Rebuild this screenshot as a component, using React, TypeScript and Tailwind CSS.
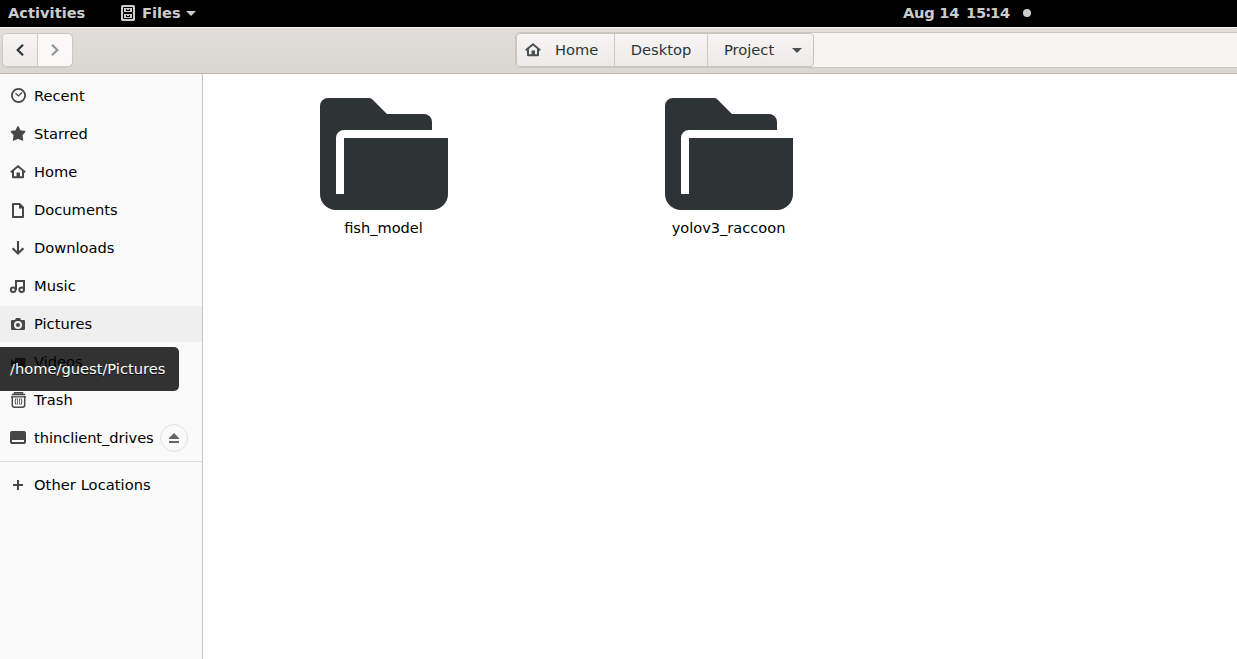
import type { ReactNode } from "react";

const HomeShape = () => (
  <>
    <path d="M0.8 8.2 8 2.3l7.2 5.900" fill="none" stroke="currentColor" strokeWidth="1.900" />
    <path d="M2 7.500 4 6V12.300h2.500V8.500h3.500v3.800h2V6l2 1.500V13.300a1 1 0 0 1-1 1H3a1 1 0 0 1-1-1z" />
  </>
);

const Icon = ({ children }: { children: ReactNode }) => (
  <svg width="16" height="16" viewBox="0 0 16 16" fill="currentColor" className="shrink-0 overflow-visible">
    {children}
  </svg>
);

const places: { name: string; icon: ReactNode; active?: boolean; eject?: boolean }[] = [
  {
    name: "Recent",
    icon: (
      <>
        <circle cx="8.500" cy="7.500" r="6.600" fill="none" stroke="currentColor" strokeWidth="1.800" />
        <path d="M5.600 5.300 8.400 7.900 12 4.600" fill="none" stroke="currentColor" strokeWidth="1.300" />
      </>
    ),
  },
  {
    name: "Starred",
    icon: (
      <path
        d="M8 1 10 5.100 14.500 5.600 11.600 9 12.400 13.800 8 12 3.700 13.800 4.500 9 1.600 5.600 6 5.100z"
        stroke="currentColor"
        strokeWidth="1.700"
        strokeLinejoin="round"
      />
    ),
  },
  { name: "Home", icon: <HomeShape /> },
  {
    name: "Documents",
    icon: (
      <path
        fillRule="evenodd"
        d="M3 1h7l4 4V15a1 1 0 0 1-1 1H3a1 1 0 0 1-1-1V2a1 1 0 0 1 1-1zM4 3v11h8V6.500H9V3z"
      />
    ),
  },
  {
    name: "Downloads",
    icon: <path d="M8 1v12M2.600 8.200 8 13.500l5.400-5.300" fill="none" stroke="currentColor" strokeWidth="2.100" />,
  },
  {
    name: "Music",
    icon: (
      <g fill="none" stroke="currentColor" strokeWidth="2">
        <circle cx="3.200" cy="11.800" r="2.300" />
        <circle cx="11.700" cy="11.800" r="2.300" />
        <path d="M6 12V3h8v9" />
      </g>
    ),
  },
  {
    name: "Pictures",
    active: true,
    icon: (
      <path
        fillRule="evenodd"
        d="M6 2h4l1 2h3a1 1 0 0 1 1 1v8a1 1 0 0 1-1 1H2a1 1 0 0 1-1-1V5a1 1 0 0 1 1-1h3zM8 5a4 4 0 1 0 0 8 4 4 0 0 0 0-8zm0 2a2 2 0 1 1 0 4 2 2 0 0 1 0-4z"
      />
    ),
  },
  {
    name: "Videos",
    icon: <path d="M6 4h8.300a1 1 0 0 1 1 1v7.500a1 1 0 0 1-1 1H6a1 1 0 0 1-1-1V10l-4 3V5l4 3V5a1 1 0 0 1 1-1z" />,
  },
  {
    name: "Trash",
    icon: (
      <g fill="none" stroke="currentColor">
        <path d="M4.500 2V.8h8V2M1.800 2.500h13.400" strokeWidth="1.400" />
        <path d="M1 4.800h15" strokeWidth="1.300" />
        <path d="M2.300 4.800v8.200Q2.300 15.200 4.500 15.200h8q2.200 0 2.200-2.200V4.800" strokeWidth="1.500" />
        <path d="M6 6.200q-1.700 3.200 0 6.600M11 6.200q1.700 3.200 0 6.600" strokeWidth="1" />
        <path d="M7.500 6.500v6M9.500 6.500v6" strokeWidth=".8" />
      </g>
    ),
  },
  {
    name: "thinclient_drives",
    eject: true,
    icon: (
      <path
        fillRule="evenodd"
        d="M2 1h12a2 2 0 0 1 2 2v9a2 2 0 0 1-2 2H2a2 2 0 0 1-2-2V3a2 2 0 0 1 2-2zM2 10v2h12v-2z"
      />
    ),
  },
];

const Folder = ({ name }: { name: string }) => (
  <div className="flex w-[345px] flex-col items-center">
    <svg width="128" height="112" viewBox="0 0 128 112" fill="#2e3436">
      <path d="M8 0h41q2.500 0 4 2l14 14h37a8 8 0 0 1 8 8v8H24a8 8 0 0 0-8 8v56h8V40h104v56a16 16 0 0 1-16 16H16a16 16 0 0 1-16-16V8a8 8 0 0 1 8-8z" />
    </svg>
    <span className="mt-2 text-[14.58px] leading-5">{name}</span>
  </div>
);

export default function App() {
  return (
    <div className="relative flex h-[659px] w-[1237px] flex-col overflow-hidden bg-white font-['DejaVu_Sans',sans-serif] text-[14.667px] text-black">
      <div className="flex h-[27px] shrink-0 items-center bg-black pb-px pl-2 font-bold text-[#cccccc]">
        <span className="w-[113px] leading-[24px]">Activities</span>
        <svg width="14" height="16" viewBox="0 0 14 16" fill="currentColor">
          <rect width="14" height="16" rx="1.5" />
          <path d="M2.500 2.500h9v5h-9zM2.500 8.500h9v5h-9z" fill="none" stroke="#000" strokeWidth="1" />
          <path d="M5 4h1v1h2V4h1v2H5zM5 10h1v1h2v-1h1v2H5z" fill="#000" />
        </svg>
        <span className="ml-[7px] w-[44px] leading-[24px]">Files</span>
        <svg width="10" height="5" viewBox="0 0 10 5" fill="currentColor">
          <path d="M0 0h10L5 5z" />
        </svg>
        <div className="ml-[707px] flex w-[120px] items-center leading-[24px] tracking-[-0.25px]">
          <span className="w-[63px]">Aug 14</span>
          <span>15∶14</span>
        </div>
        <div className="size-2 rounded-full bg-[#cccccc]" />
      </div>

      <div className="flex h-[47px] shrink-0 items-center border-t border-b border-t-[#f7f6f5] border-b-[#bfb8b1] bg-linear-to-b from-[#e1dedb] to-[#dad6d2] pb-px pl-[2px] text-[#2e3436]">
        <div className="flex h-[34px] w-[71px] rounded-[5px] border border-[#cdc7c2] bg-[#faf9f8] shadow-[0_1px_1px_rgba(0,0,0,0.06)]">
          <div className="flex w-[35px] items-center justify-center rounded-l-[4px] border-r border-[#cdc7c2] bg-linear-to-b from-[#f6f5f4] to-[#edebe9]">
            <svg width="8" height="12" viewBox="0 0 8 12" fill="none" stroke="#2e3436" strokeWidth="2.200">
              <path d="M7 .8 1.700 6 7 11.200" />
            </svg>
          </div>
          <div className="flex flex-1 items-center justify-center">
            <svg width="8" height="12" viewBox="0 0 8 12" fill="none" stroke="#929595" strokeWidth="2.200">
              <path d="M1 .8 6.300 6 1 11.200" />
            </svg>
          </div>
        </div>
        <div className="ml-[442px] flex h-[36px] flex-1 rounded-l-[5px] border border-r-0 border-[#cdc7c2] bg-[#f6f5f3]">
          <div className="flex h-[34px] w-[298px] rounded-[4px] border border-[#c8c2bc] bg-linear-to-b from-[#f6f5f4] to-[#edebe9]">
            <div className="flex w-[98px] items-center border-r border-[#cdc7c2] pl-[8px]">
              <span className="text-[#4b5153]">
                <Icon>
                  <HomeShape />
                </Icon>
              </span>
              <span className="ml-[14px]">Home</span>
            </div>
            <div className="flex w-[93px] items-center justify-center border-r border-[#cdc7c2]">Desktop</div>
            <div className="flex flex-1 items-center pl-4">
              <span className="w-[68px]">Project</span>
              <svg width="10" height="5" viewBox="0 0 10 5" fill="#4b5153">
                <path d="M0 0h10L5 5z" />
              </svg>
            </div>
          </div>
        </div>
      </div>

      <div className="flex min-h-0 flex-1">
        <div className="flex w-[203px] shrink-0 flex-col border-r border-[#c6c6c0] bg-[#fafafa] pt-[4px]">
          <div className="flex flex-col gap-[2px]">
            {places.map((p) => (
              <div key={p.name} className={`flex h-9 items-center pl-[10px] ${p.active ? "bg-[#efefef]" : ""}`}>
                <span className="text-[#474747]">
                  <Icon>{p.icon}</Icon>
                </span>
                <span className={`ml-2 w-[126px] ${p.eject ? "tracking-[-0.06px]" : ""}`}>{p.name}</span>
                {p.eject && (
                  <span className="flex size-7 shrink-0 items-center justify-center rounded-full border border-[#e3dfdf]">
                    <svg width="10" height="10" viewBox="0 0 10 10" fill="#626868">
                      <path d="M5 0 10 5v1H0V5zM0 8h10v2H0z" />
                    </svg>
                  </span>
                )}
              </div>
            ))}
          </div>
          <div className="my-[5px] h-px shrink-0 bg-[#dddddd]" />
          <div className="flex h-9 items-center pl-[10px]">
            <span className="text-[#474747]">
              <Icon>
                <path d="M7 3h2v4h4v2H9v4H7V9H3V7h4z" />
              </Icon>
            </span>
            <span className="ml-2 tracking-[0.06px]">Other Locations</span>
          </div>
        </div>
        <div className="flex flex-1 items-start pt-6 pl-[8px]">
          <Folder name="fish_model" />
          <Folder name="yolov3_raccoon" />
        </div>
      </div>

      <div className="absolute top-[347px] left-0 flex h-11 w-[179px] items-center rounded-r-[5px] bg-black/80 pl-[10px] text-white [text-shadow:0_1px_0_rgba(0,0,0,0.8)]">
        /home/guest/Pictures
      </div>
    </div>
  );
}
